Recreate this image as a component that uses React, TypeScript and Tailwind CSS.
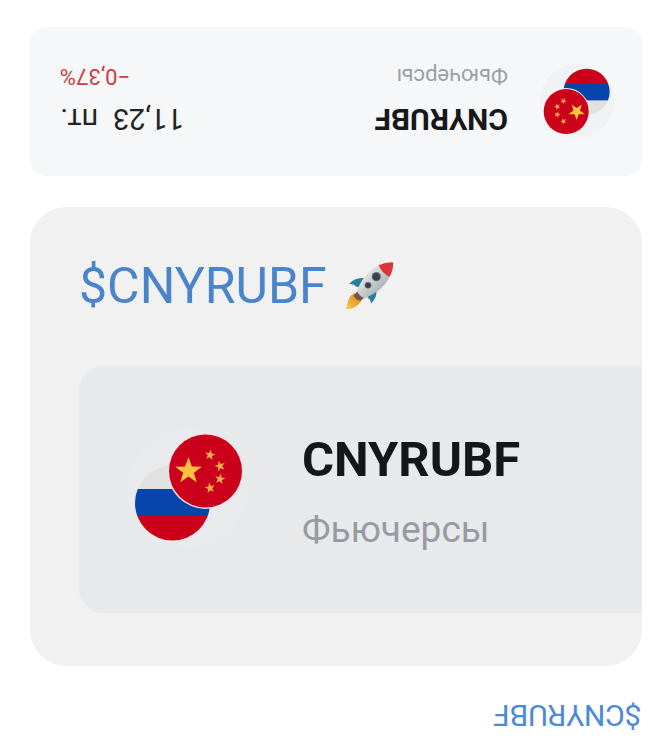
import React from "react";

const SMALL_STARS = [
  { x: 82, y: 27, angle: 10 },
  { x: 92, y: 38, angle: -15 },
  { x: 92, y: 51, angle: 10 },
  { x: 82, y: 60, angle: -10 },
];

const STAR_POINTS = "0,-10 2.4,-3.2 9.5,-3.1 3.8,1.2 5.9,8.1 0,4 -5.9,8.1 -3.8,1.2 -9.5,-3.1 -2.4,-3.2";

interface PairIconProps {
  id: string;
  className: string;
  halo: string;
  ring: string;
}

const PairIcon: React.FC<PairIconProps> = ({ id, className, halo, ring }) => (
  <svg viewBox="0 0 120 120" className={className} aria-hidden="true">
    <clipPath id={id}>
      <circle cx="44.5" cy="75" r="37.5" />
    </clipPath>
    <circle cx="60" cy="60" r="60" fill={halo} />
    {/* Russia */}
    <g clipPath={`url(#${id})`}>
      <rect x="0" y="30" width="120" height="31" fill="#e1e1e2" />
      <rect x="0" y="61" width="120" height="27" fill="#0544a8" />
      <rect x="0" y="87.5" width="120" height="30" fill="#cb001b" />
    </g>
    {/* China */}
    <circle cx="77.5" cy="43" r="38" fill={ring} />
    <circle cx="77.5" cy="43" r="36.5" fill="#cb001b" />
    <polygon points={STAR_POINTS} transform="translate(60.5 43) scale(1.4)" fill="#f8c440" />
    {SMALL_STARS.map((s) => (
      <polygon
        key={s.y}
        points={STAR_POINTS}
        transform={`translate(${s.x} ${s.y}) rotate(${s.angle}) scale(0.55)`}
        fill="#f4ab4a"
      />
    ))}
  </svg>
);

const Rocket: React.FC = () => (
  <svg viewBox="30 22 150 150" className="size-[50px] shrink-0" role="img" aria-label="rocket">
    <defs>
      <linearGradient id="hull" x1="0" y1="0" x2="1" y2="1">
        <stop offset="0.25" stopColor="#e4e5e7" />
        <stop offset="0.8" stopColor="#a9adb1" />
      </linearGradient>
      <linearGradient id="flame" x1="1" y1="0" x2="0" y2="1">
        <stop offset="0.2" stopColor="#e58a1f" />
        <stop offset="1" stopColor="#fbcb4d" />
      </linearGradient>
    </defs>
    <path d="M60 118 C44 124 36 143 34 167 C52 167 70 158 80 140 Z" fill="url(#flame)" />
    <path d="M67 112 L56 127 Q62 139 76 141 L88 132 Z" fill="#71564d" />
    <path d="M92 74 Q62 68 42 91 Q57 89 64 99 L76 102 Z" fill="#2b7d9e" />
    <path d="M124 106 Q128 131 108 150 Q108 137 98 132 L97 122 Z" fill="#2b7d9e" />
    <path d="M132 34 C102 46 82 74 65 111 Q72 127 89 134 C125 118 151 99 164 68 Z" fill="url(#hull)" />
    <path d="M131 35 Q151 25 174 26 Q176 48 164 69 Q142 61 131 35 Z" fill="#dc3338" />
    <circle cx="124" cy="69" r="14" fill="#6d7681" />
    <circle cx="124" cy="69" r="11" fill="#354150" />
    <circle cx="99" cy="95" r="10" fill="#6d7681" />
    <circle cx="99" cy="95" r="8" fill="#354150" />
  </svg>
);

export default function App() {
  return (
    <main className="flex flex-col gap-[31px] bg-white px-[30px] pt-[27px] pb-6 font-[Roboto,'Noto_Sans',sans-serif]">
      <section className="flex rotate-180 items-center gap-8 rounded-2xl bg-[#f5f7f9] pt-[38px] pr-[30px] pb-[37px] pl-7">
        <PairIcon id="pair-small" className="size-[74px] shrink-0" halo="#f1f2f4" ring="#f1f2f4" />
        <div className="flex flex-1 flex-col gap-3">
          <h2 className="text-[30px] leading-[38px] font-bold text-[#17181a]">CNYRUBF</h2>
          <p className="text-[22px] leading-6 text-[#9a9fa6]">Фьючерсы</p>
        </div>
        <div className="flex flex-col gap-3 text-right">
          <p className="text-[29px] leading-[38px] whitespace-pre text-[#222325]">11,23  пт.</p>
          <p className="text-[22px] leading-6 text-[#d43a3f]">−0,37%</p>
        </div>
      </section>

      <section className="overflow-hidden rounded-[36px] bg-[#f1f1f1] pt-[49px] pb-[53px] pl-[49px]">
        <h1 className="mb-[50px] flex items-center gap-[18px] text-[50px] leading-[60px] text-[#4a85cc]">
          <a href="#cnyrubf">$CNYRUBF</a>
          <Rocket />
        </h1>
        <div className="flex items-center gap-[54px] rounded-l-3xl bg-[#e8e9eb] pt-[60px] pb-[63px] pl-[49px]">
          <PairIcon id="pair-large" className="size-[120px] shrink-0" halo="#e9eaec" ring="#e6e6ea" />
          <div className="flex flex-col gap-4">
            <h2 className="text-[49px] leading-[68px] font-bold text-[#151617]">CNYRUBF</h2>
            <p className="text-[37px] leading-10 text-[#969ba3]">Фьючерсы</p>
          </div>
        </div>
      </section>

      <a href="#cnyrubf" className="rotate-180 self-end text-[30px] leading-9 text-[#4a8ad8]">
        $CNYRUBF
      </a>
    </main>
  );
}
